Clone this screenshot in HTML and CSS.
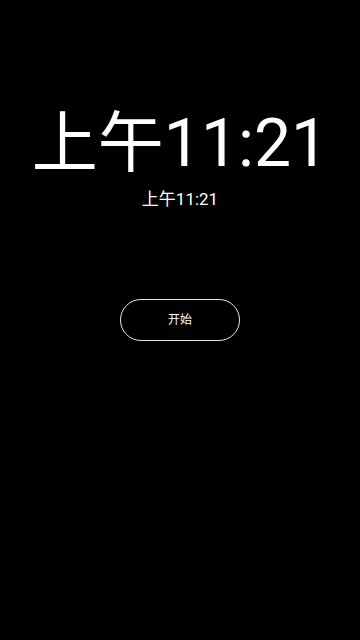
FILE: index.html
```html
<!DOCTYPE html>
<html>
<head>
<meta charset="utf-8">
<link rel="stylesheet" href="styles.css">
</head>
<body>
<main class="screen">
  <div class="clock">上午11:21</div>
  <div class="clock-small">上午11:21</div>
  <button class="start">开始</button>
</main>
</body>
</html>
```
FILE: styles.css
```css
html, body {
  margin: 0;
  padding: 0;
  background: #000;
}
.screen {
  width: 360px;
  height: 640px;
  display: flex;
  flex-direction: column;
  align-items: center;
  font-family: Roboto, "Noto Sans CJK SC", sans-serif;
  color: #fff;
}
.clock {
  margin-top: 104px;
  font-size: 66px;
  line-height: 80px;
  height: 80px;
}
.clock-small {
  margin-top: 4px;
  font-size: 17px;
  line-height: 22px;
}
.start {
  margin-top: 89px;
  width: 120px;
  height: 42px;
  border: 1px solid #e8e8e8;
  border-radius: 21px;
  background: transparent;
  color: #fff;
  font-family: Roboto, "Noto Sans CJK SC", sans-serif;
  font-size: 12px;
  line-height: 14px;
  padding: 0 0 1px;
}
```
